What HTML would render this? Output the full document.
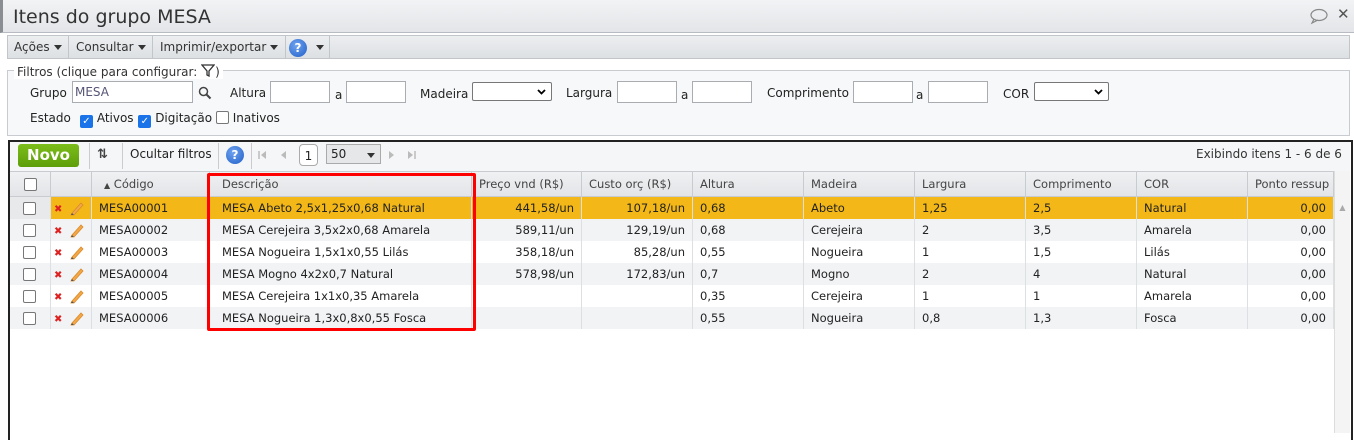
<!DOCTYPE html>
<html><head><meta charset="utf-8"><style>
*{box-sizing:border-box;margin:0;padding:0}
body{width:1354px;height:433px;overflow:hidden;background:#fff;font-family:"DejaVu Sans","Liberation Sans",sans-serif;font-size:11.5px;color:#222;position:relative}
.abs{position:absolute}
.title{left:0;top:0;width:1354px;height:33px;background:linear-gradient(#f2f3f5,#e3e5e8);border-bottom:1px solid #b8bcc2;border-left:3px solid #8a8d92}
.title span{position:absolute;left:10px;top:6px;font-size:19px;color:#333}
.tb{left:7px;top:35px;width:1343px;height:24px;background:linear-gradient(#eceef0,#dde0e3);border:1px solid #c2c6cb}
.tb div{position:absolute;top:0;height:22px;line-height:22px;font-size:12px;color:#333;border-right:1px solid #c2c6cb}
.tri{display:inline-block;width:0;height:0;border-left:4px solid transparent;border-right:4px solid transparent;border-top:5px solid #333;vertical-align:middle;margin-left:4px}
.fs{left:7px;top:70px;width:1343px;height:66px;border:1px solid #c8ccd0;background:#f7f8f9}
.lg{left:14px;top:64px;background:#fff;padding:0 3px;font-size:12px;color:#333}
.in{position:absolute;height:22px;border:1px solid #a9adb2;background:#fff}
.lb{position:absolute;font-size:12px;color:#222}
.cb{display:inline-block;width:13px;height:13px;border:1px solid #777;border-radius:2px;background:#fff;vertical-align:-2px}
.cbc{background:#1a73e8;border-color:#1a73e8;color:#fff;font-size:10px;line-height:11px;text-align:center}
.grid{left:8px;top:140px;width:1345px;height:300px;border:2px solid #222;border-bottom:none;background:#fff}
.gt{left:10px;top:142px;width:1340px;height:29px;background:#f5f6f7}
.hd{left:10px;top:171px;width:1324px;height:26px;background:linear-gradient(#f0f1f3,#e2e4e7);border-top:1px solid #c8ccd0;border-bottom:1px solid #c8ccd0}
.c{position:absolute;height:22px;line-height:22px;white-space:nowrap;overflow:hidden;padding:0 7px;border-right:1px solid #dde0e3}
.h{height:25px;line-height:25px;color:#444;border-right:1px solid #c8ccd0}
.r{text-align:right}
.row{position:absolute;left:10px;width:1324px;height:22px}
</style></head><body>
<div class="abs title"><span>Itens do grupo MESA</span>
<svg class="abs" style="left:1306px;top:8px" width="20" height="17"><ellipse cx="10" cy="7" rx="8" ry="5.5" fill="none" stroke="#888" stroke-width="1.2"/><path d="M5 11 L3 15 L9 12" fill="none" stroke="#888" stroke-width="1.2"/></svg>
<span style="left:1334px;top:5px;font-size:15px;font-weight:bold;color:#555">✕</span></div>
<div class="abs tb">
<div style="left:0;width:61px;padding-left:6px">Ações<span class="tri"></span></div>
<div style="left:61px;width:84px;padding-left:7px">Consultar<span class="tri"></span></div>
<div style="left:145px;width:133px;padding-left:7px">Imprimir/exportar<span class="tri"></span></div>
<div style="left:278px;width:44px;padding-left:3px"><span style="display:inline-block;width:18px;height:18px;border-radius:50%;background:radial-gradient(circle at 40% 35%,#6fa3f0,#1f5fc8);color:#fff;font-weight:bold;text-align:center;line-height:18px;font-size:12px;vertical-align:middle">?</span><span class="tri" style="margin-left:9px"></span></div>
</div>
<div class="abs fs"></div>
<div class="abs lg">Filtros (clique para configurar: <svg width="14" height="13" style="vertical-align:-1px"><path d="M1 1H13L8 7V12L6 11V7Z" fill="none" stroke="#333" stroke-width="1.3"/></svg>)</div>
<div class="lb" style="left:30px;top:86px">Grupo</div>
<div class="in" style="left:72px;top:81px;width:121px;color:#557;padding:3px 2px;font-size:12px">MESA</div>
<svg class="abs" style="left:198px;top:86px" width="14" height="14"><circle cx="5.5" cy="5.5" r="4" fill="none" stroke="#444" stroke-width="1.5"/><path d="M8.5 8.5L12.5 12.5" stroke="#444" stroke-width="2"/></svg>
<div class="lb" style="left:230px;top:86px">Altura</div><div class="in" style="left:270px;top:81px;width:60px"></div>
<div class="lb" style="left:335px;top:88px">a</div><div class="in" style="left:346px;top:81px;width:60px"></div>
<div class="lb" style="left:420px;top:87px">Madeira</div><div class="in" style="left:472px;top:82px;width:80px;height:19px;border-radius:2px;border-color:#777"><svg style="position:absolute;right:5px;top:6px" width="9" height="6"><path d="M1 1L4.5 4.5L8 1" fill="none" stroke="#000" stroke-width="1.8"/></svg></div>
<div class="lb" style="left:566px;top:86px">Largura</div><div class="in" style="left:617px;top:81px;width:60px"></div>
<div class="lb" style="left:681px;top:88px">a</div><div class="in" style="left:692px;top:81px;width:60px"></div>
<div class="lb" style="left:767px;top:86px">Comprimento</div><div class="in" style="left:853px;top:81px;width:60px"></div>
<div class="lb" style="left:916px;top:88px">a</div><div class="in" style="left:928px;top:81px;width:60px"></div>
<div class="lb" style="left:1003px;top:87px">COR</div><div class="in" style="left:1034px;top:82px;width:75px;height:19px;border-radius:2px;border-color:#777"><svg style="position:absolute;right:5px;top:6px" width="9" height="6"><path d="M1 1L4.5 4.5L8 1" fill="none" stroke="#000" stroke-width="1.8"/></svg></div>
<div class="lb" style="left:30px;top:111px">Estado</div>
<div class="lb" style="left:80px;top:111px"><span class="cb cbc">✓</span> Ativos <span class="cb cbc" style="margin-left:1px">✓</span> Digitação <span class="cb"></span> Inativos</div>
<div class="abs grid"></div>
<div class="abs gt"></div>
<div class="abs" style="left:18px;top:144px;width:61px;height:23px;background:linear-gradient(#7cbd1a,#5e9e0a);border-radius:3px;color:#fff;font-weight:bold;font-size:15px;text-align:center;line-height:23px">Novo</div>
<div class="abs" style="left:89px;top:143px;height:26px;border-left:1px solid #ccc"></div>
<div class="abs" style="left:97px;top:147px;font-size:13px;font-weight:bold;color:#444">⇅</div>
<div class="abs" style="left:122px;top:143px;height:26px;border-left:1px solid #ccc"></div>
<div class="abs lb" style="left:130px;top:147px">Ocultar filtros</div>
<div class="abs" style="left:218px;top:143px;height:26px;border-left:1px solid #ccc"></div>
<div class="abs" style="left:226px;top:146px;width:18px;height:18px;border-radius:50%;background:radial-gradient(circle at 40% 35%,#6fa3f0,#1f5fc8);color:#fff;font-weight:bold;text-align:center;line-height:18px;font-size:12px">?</div>
<div class="abs" style="left:251px;top:143px;height:26px;border-left:1px solid #ccc"></div>
<svg class="abs" style="left:258px;top:150px" width="30" height="10"><path d="M1 1V9" stroke="#bbb" stroke-width="1.5"/><path d="M8 1L3 5L8 9Z M28 1L23 5L28 9Z" fill="#bbb"/></svg>
<div class="abs" style="left:299px;top:144px;width:19px;height:22px;border:1px solid #aaa;border-radius:4px;background:#fff;text-align:center;line-height:22px;font-size:12px">1</div>
<div class="abs" style="left:326px;top:144px;width:55px;height:20px;border:1px solid #aaa;background:#e6e7e9;padding-left:4px;line-height:19px;font-size:12px">50<span class="tri" style="position:absolute;right:5px;top:8px;margin:0"></span></div>
<svg class="abs" style="left:387px;top:150px" width="30" height="10"><path d="M2 1L7 5L2 9Z M21 1L26 5L21 9Z" fill="#bbb"/><path d="M28 1V9" stroke="#bbb" stroke-width="1.5"/></svg>
<div class="abs lb" style="left:1196px;top:147px;color:#333">Exibindo itens 1 - 6 de 6</div>
<div class="abs hd">
<div class="c h" style="left:0;width:41px"><span class="cb" style="margin-left:7px;vertical-align:-3px"></span></div>
<div class="c h" style="left:41px;width:41px"></div>
<div class="c h" style="left:82px;width:118px;padding-left:12px"><span style="font-size:8px">▲</span> Código</div>
<div class="c h" style="left:200px;width:262px;padding-left:12px">Descrição</div>
<div class="c h" style="left:462px;width:110px">Preço vnd (R$)</div>
<div class="c h" style="left:572px;width:111px">Custo orç (R$)</div>
<div class="c h" style="left:683px;width:111px">Altura</div>
<div class="c h" style="left:794px;width:111px">Madeira</div>
<div class="c h" style="left:905px;width:111px">Largura</div>
<div class="c h" style="left:1016px;width:111px">Comprimento</div>
<div class="c h" style="left:1127px;width:111px">COR</div>
<div class="c h" style="left:1238px;width:86px">Ponto ressup</div>
</div>
<div class="abs" style="left:1334px;top:171px;width:16px;height:262px;background:#f4f4f5;border-left:1px solid #ddd"><div style="font-size:8px;color:#aaa;text-align:center;margin-top:32px">▲</div></div>
<div id="rows"></div>
<script>
var d=[["MESA00001","MESA Abeto 2,5x1,25x0,68 Natural","441,58/un","107,18/un","0,68","Abeto","1,25","2,5","Natural"],
["MESA00002","MESA Cerejeira 3,5x2x0,68 Amarela","589,11/un","129,19/un","0,68","Cerejeira","2","3,5","Amarela"],
["MESA00003","MESA Nogueira 1,5x1x0,55 Lilás","358,18/un","85,28/un","0,55","Nogueira","1","1,5","Lilás"],
["MESA00004","MESA Mogno 4x2x0,7 Natural","578,98/un","172,83/un","0,7","Mogno","2","4","Natural"],
["MESA00005","MESA Cerejeira 1x1x0,35 Amarela","","","0,35","Cerejeira","1","1","Amarela"],
["MESA00006","MESA Nogueira 1,3x0,8x0,55 Fosca","","","0,55","Nogueira","0,8","1,3","Fosca"]];
var pencil='<svg width="16" height="16" style="position:absolute;left:18px;top:3px"><path d="M3 13L12 3L14 5L5 15L2 15Z" fill="#f3a847" stroke="#d98a2a" stroke-width="0.8"/><path d="M2 15L3 13L5 15Z" fill="#555"/></svg>';
var h="";
d.forEach(function(r,i){var bg=i==0?"#f3b817":(i%2?"#f2f3f5":"#fff");
h+='<div class="row" style="top:'+(197+i*22)+'px;background:'+bg+'">'+
'<div class="c" style="left:0;width:41px;background:'+(i==0?"#e8e9eb":bg)+'"><span class="cb" style="margin-left:6px;vertical-align:-3px"></span></div>'+
'<div class="c" style="left:41px;width:41px;padding-left:3px"><span style="color:#d22;font-size:10px;font-weight:bold">✖</span>'+pencil+'</div>'+
'<div class="c" style="left:82px;width:118px">'+r[0]+'</div>'+
'<div class="c" style="left:200px;width:262px;padding-left:12px">'+r[1]+'</div>'+
'<div class="c r" style="left:462px;width:110px">'+r[2]+'</div>'+
'<div class="c r" style="left:572px;width:111px">'+r[3]+'</div>'+
'<div class="c" style="left:683px;width:111px">'+r[4]+'</div>'+
'<div class="c" style="left:794px;width:111px">'+r[5]+'</div>'+
'<div class="c" style="left:905px;width:111px">'+r[6]+'</div>'+
'<div class="c" style="left:1016px;width:111px">'+r[7]+'</div>'+
'<div class="c" style="left:1127px;width:111px">'+r[8]+'</div>'+
'<div class="c r" style="left:1238px;width:86px">0,00</div></div>';});
document.getElementById("rows").innerHTML=h;
</script>
<div class="abs" style="left:207px;top:173px;width:269px;height:158px;border:3px solid #f00;border-radius:2px"></div>
</body></html>
